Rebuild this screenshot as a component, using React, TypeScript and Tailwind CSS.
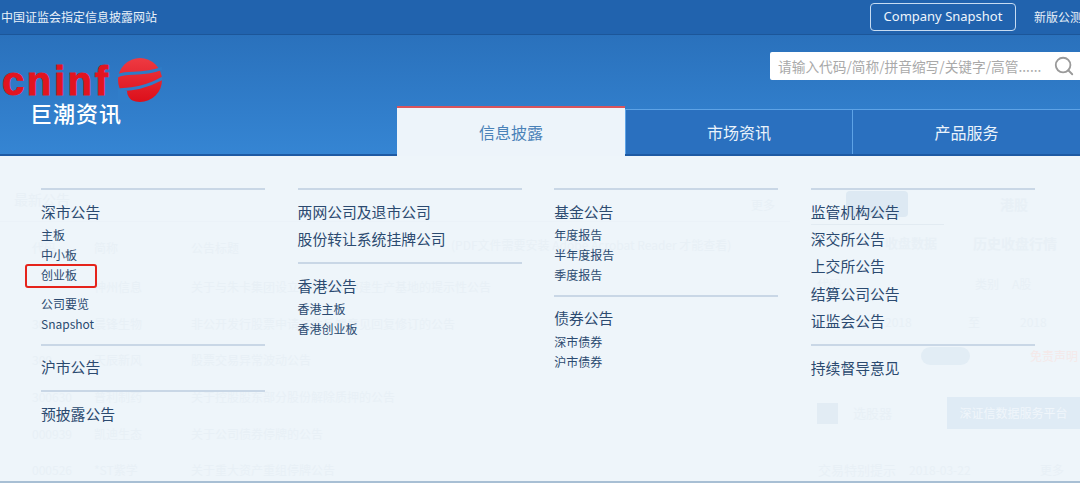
import React from 'react';
import { Search } from 'lucide-react';

const CJK = "font-['Noto_Sans_CJK_SC','Noto_Sans',sans-serif]";

type Item = { text: string; sub?: boolean; gap?: boolean };
type Group = { items: Item[] };

const columns: Group[][] = [
  [
    {
      items: [
        { text: '深市公告' },
        { text: '主板', sub: true },
        { text: '中小板', sub: true },
        { text: '创业板', sub: true },
        { text: '公司要览', sub: true, gap: true },
        { text: 'Snapshot', sub: true },
      ],
    },
    { items: [{ text: '沪市公告' }] },
    { items: [{ text: '预披露公告' }] },
  ],
  [
    { items: [{ text: '两网公司及退市公司' }, { text: '股份转让系统挂牌公司' }] },
    {
      items: [
        { text: '香港公告' },
        { text: '香港主板', sub: true },
        { text: '香港创业板', sub: true },
      ],
    },
  ],
  [
    {
      items: [
        { text: '基金公告' },
        { text: '年度报告', sub: true },
        { text: '半年度报告', sub: true },
        { text: '季度报告', sub: true },
      ],
    },
    {
      items: [
        { text: '债券公告' },
        { text: '深市债券', sub: true },
        { text: '沪市债券', sub: true },
      ],
    },
  ],
  [
    {
      items: [
        { text: '监管机构公告' },
        { text: '深交所公告' },
        { text: '上交所公告' },
        { text: '结算公司公告' },
        { text: '证监会公告' },
      ],
    },
    { items: [{ text: '持续督导意见' }] },
  ],
];

const ghostRows = [
  ['', '神州信息', '关于与朱卡集团设立合资公司中建生产基地的提示性公告'],
  ['300', '晨锋生物', '非公开发行股票申请文件反馈意见回复修订的公告'],
  ['300', '天辰新风', '股票交易异常波动公告'],
  ['300630', '普利制药', '关于控股股东部分股份解除质押的公告'],
  ['000939', '凯迪生态', '关于公司债券停牌的公告'],
  ['000526', '*ST紫学', '关于重大资产重组停牌公告'],
];

const Logo = () => (
  <div className="w-[170px]">
    <div className="flex items-start">
      <span className="w-[118px] shrink-0 pl-[2px] mt-[2px] font-['Liberation_Sans',sans-serif] font-bold text-[40px] leading-[41px] tracking-[2.6px] text-[#e2141f] [-webkit-text-stroke:1px_#e2141f]">
        cninf
      </span>
      <svg width="44" height="44" viewBox="0 0 44 44" className="mt-[-1px]">
        <defs>
          <linearGradient id="globe" x1="0" y1="0" x2="0" y2="1">
            <stop offset="0" stopColor="#ee3a42" />
            <stop offset="1" stopColor="#dc0f1a" />
          </linearGradient>
        </defs>
        <circle cx="22" cy="22" r="22" fill="url(#globe)" />
        <path d="M-1 18 C10 12 22 19 45 10" fill="none" stroke="#2e7bc6" strokeWidth="3" />
        <path d="M-1 32 C12 31 26 31 45 20" fill="none" stroke="#307dc9" strokeWidth="3" />
        <path d="M-1 30 L9 33 C9 38 12 42 18 45 L-1 45 Z" fill="#307dc9" />
      </svg>
    </div>
    <div className={`${CJK} text-white text-[22px] leading-[26px] tracking-[1px] font-medium ml-[30px] mt-[-3px]`}>
      巨潮资讯
    </div>
  </div>
);

const Ghost = () => (
  <div className={`${CJK} flex h-[327px] bg-[#eef5fa] text-[12px] text-[#e8f0f6]`}>
    <div className="w-[790px] shrink-0 pt-[29px]">
      <div className="flex justify-between pl-[14px] pr-[15px] h-[37px] pb-[7px] items-center border-b border-[#ebf2f8]">
        <span className="text-[14px]">最新公告</span>
        <span className="mt-[10px]">更多</span>
      </div>
      <div className="flex items-center h-[37px] mt-[7px] pl-[32px]">
        <span className="w-[62px]">代码</span>
        <span className="w-[97px]">简称</span>
        <span className="w-[260px]">公告标题</span>
        <span className="pb-[6px]">(PDF文件需要安装 Adobe Acrobat Reader 才能查看)</span>
      </div>
      <div className="mt-[3px]">
        {ghostRows.map((r) => (
          <div key={r[2]} className="flex items-center h-[36.6px] pl-[32px]">
            <span className="w-[62px]">{r[0]}</span>
            <span className="w-[97px]">{r[1]}</span>
            <span>{r[2]}</span>
          </div>
        ))}
      </div>
    </div>
    <div className="flex-1 pl-[21px] pt-[35px]">
      <div className="flex items-center h-[26px]">
        <span className="ml-[35px] w-[62px] h-[26px] rounded-sm bg-[#dde9f3]" />
        <span className="ml-[92px] text-[14px] font-bold">港股</span>
      </div>
      <div className="h-[1px] w-[133px] bg-[#e2ebf2] mt-[7px]" />
      <div className="flex items-center h-[36px] font-bold text-[13px]">
        <span className="ml-[74px] w-[88px]">收盘数据</span>
        <span className="text-[14px]">历史收盘行情</span>
      </div>
      <div className="flex items-center h-[36px] mt-[5px]">
        <span className="ml-[6px] w-[158px]">代码</span>
        <span className="w-[37px]">类别</span>
        <span>A股</span>
      </div>
      <div className="flex items-center h-[36px] mt-[2px]">
        <span className="ml-[74px] w-[83px]">2018</span>
        <span className="w-[52px]">至</span>
        <span>2018</span>
      </div>
      <div className="flex items-center h-[32px]">
        <span className="ml-[110px] w-[49px] h-[18px] rounded-full bg-[#e2edf5]" />
        <span className="ml-[60px] text-[#f5e9e9]">免责声明</span>
      </div>
      <div className="flex items-center h-[32px] mt-[25px]">
        <span className="ml-[6px] w-[21px] h-[21px] bg-[#e2ecf4]" />
        <span className="ml-[15px] w-[94px] text-[13px]">选股器</span>
        <span className="w-[133px] h-[32px] bg-[#dfebf5] text-[#f0f6fb] text-center leading-[32px]">深证信数据服务平台</span>
      </div>
      <div className="flex items-center h-[30px] mt-[26px] ml-[7px]">
        <span className="text-[13px] w-[91px]">交易特别提示</span>
        <span className="w-[131px]">2018-03-22</span>
        <span>更多</span>
      </div>
    </div>
  </div>
);

const Menu = () => (
  <div className={`${CJK} absolute left-0 right-0 top-[156px] grid grid-cols-[224px_224px_224px_224px] gap-x-[32.6px] pl-[41px] pt-[32px] text-[#2b4a70]`}>
    {columns.map((col, i) => (
      <div key={i}>
        {col.map((group, j) => (
          <div key={j} className="border-t-2 border-[#c9d7e6] pt-[7.6px] pb-[9.6px]">
            {group.items.map((item) =>
              item.sub ? (
                <div key={item.text} className={`text-[12px] leading-[20px] ${item.gap ? 'mt-[9px]' : ''}`}>
                  {item.text}
                </div>
              ) : (
                <div key={item.text} className="text-[14.8px] leading-[27.4px]">
                  {item.text}
                </div>
              ),
            )}
          </div>
        ))}
      </div>
    ))}
  </div>
);

export default function App() {
  return (
    <div className="relative w-[1080px] h-[483px] overflow-hidden bg-[#eef5fa]">
      <div className={`${CJK} flex items-center justify-between h-[35px] pl-[1px] border-b border-[#1c5699] bg-[#2163ae] text-[12px] text-[#e9f1f9]`}>
        <span>中国证监会指定信息披露网站</span>
        <div className="flex items-center">
          <span className="flex items-center justify-center w-[146px] h-[28px] border border-[#c7dcf2] rounded-[4px] text-[13px] font-['Noto_Sans',sans-serif] text-[#eef5fc] mt-[-1px]">
            Company Snapshot
          </span>
          <span className="w-[46px] ml-[18px] whitespace-nowrap">新版公测</span>
        </div>
      </div>

      <div className="flex h-[121px] border-b-2 border-[#1e5aa3] bg-gradient-to-b from-[#2a71bc] to-[#3585d3]">
        <div className="w-[397px] shrink-0 pt-[24px]">
          <Logo />
        </div>
        <div className="flex-1 flex flex-col">
          <div className="flex justify-end pt-[17px]">
            <div className={`${CJK} flex items-center justify-between w-[310px] h-[28px] pl-[8px] pr-[5px] bg-white rounded-l-[2px] text-[13.7px] text-[#a9a9a9]`}>
              <span className="whitespace-nowrap">请输入代码/简称/拼音缩写/关键字/高管......</span>
              <Search size={22} strokeWidth={2} className="text-[#9a9a9a] shrink-0" />
            </div>
          </div>
          <div className={`${CJK} flex mt-auto h-[45px] text-[16px]`}>
            <div className="w-[228px] h-[50px] mt-[-3px] flex items-center justify-center border-t-2 border-[#d9545c] bg-[#edf4fa] text-[#4a82b8]">
              信息披露
            </div>
            <div className="w-[228px] flex items-center justify-center border-t border-l border-r border-[#5ea3e6] bg-[#2a70bf] text-[#eaf3fb]">
              市场资讯
            </div>
            <div className="flex-1 flex items-center justify-center border-t border-[#5ea3e6] bg-[#2a70bf] text-[#eaf3fb]">
              产品服务
            </div>
          </div>
        </div>
      </div>

      <Ghost />
      <div className="absolute left-0 right-0 bottom-0 h-[2px] bg-[#a8bfd4]" />
      <Menu />
      <div className="absolute left-[25px] top-[264px] w-[72px] h-[24px] border-[2px] border-[#e5231b] rounded-[3px]" />
    </div>
  );
}
